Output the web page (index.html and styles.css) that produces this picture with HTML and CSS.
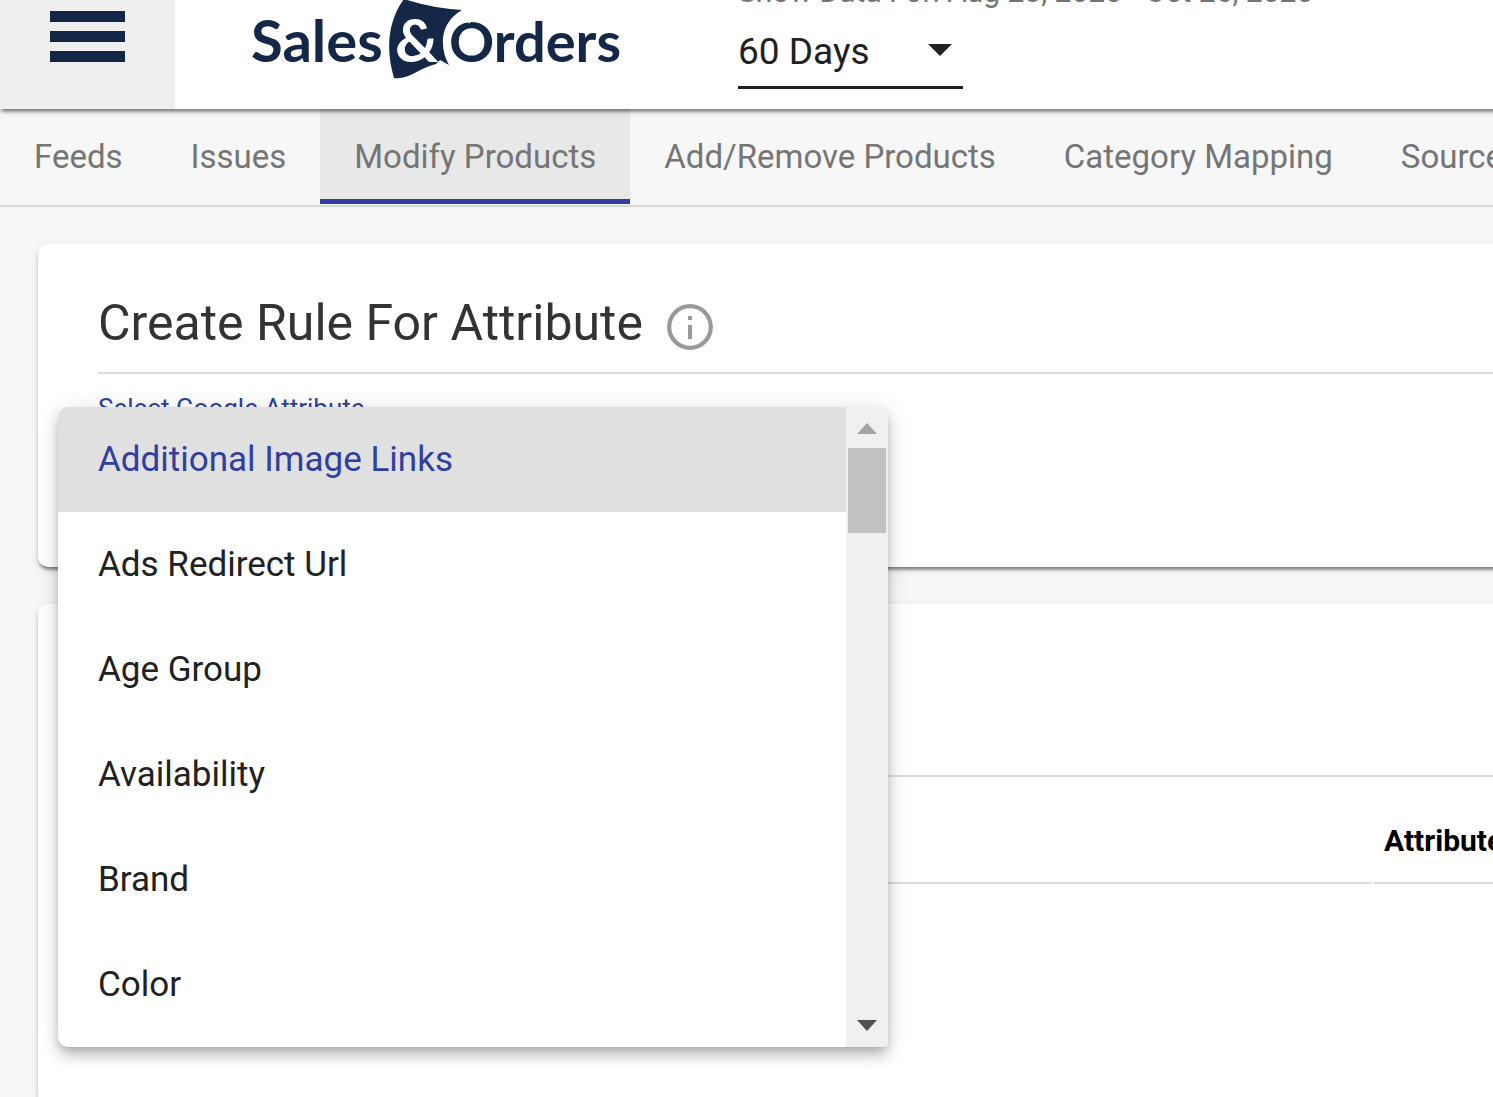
FILE: index.html
```html
<!DOCTYPE html>
<html lang="en">

<head>
	<meta charset="utf-8">
	<meta name="viewport" content="width=device-width, initial-scale=1.0">
	<title>Modify Products</title>
	<link rel="stylesheet" href="styles.css">
</head>

<body>
	<!-- top bar -->
	<header class="topbar">
		<button class="menu-button" type="button" aria-label="Menu">
			<svg width="75" height="51" viewBox="0 0 75 51">
				<path d="M0 0h75v11H0zM0 20h75v11H0zM0 40h75v11H0z" fill="#142746" />
			</svg>
		</button>

		<a class="logo" href="#" aria-label="Sales&amp;Orders">
			<svg width="372" height="80" viewBox="0 0 372 80">
				<path d="M152 -1Q179 8 210 10Q193 20 191 38Q190 53 197 65L188 60L184 64C167 68 157 80 142 78C134 51 135 22 152 -1Z" fill="#142746" />
				<text class="logo-text" x="-1" y="62">Sales</text>
				<text class="logo-amp" x="143" y="62">&amp;</text>
				<text class="logo-text orders" x="197" y="62">Orders</text>
				<path d="M216 23Q226 17 238 24" fill="none" stroke="#fff" stroke-width="1" />
			</svg>
		</a>

		<div class="range">
			<label class="range-label" for="range">Show Data For: Aug 28, 2020 - Oct 26, 2020</label>
			<div class="range-box">
				<select class="range-select" id="range">
					<option>60 Days</option>
				</select>
				<svg class="range-arrow" width="26" height="12" viewBox="0 0 26 12">
					<path d="M1 0h24L13 12z" fill="#212121" />
				</svg>
			</div>
		</div>
	</header>

	<!-- tabs -->
	<nav class="tabs">
		<a class="tab" href="#">Feeds</a>
		<a class="tab" href="#">Issues</a>
		<a class="tab active" href="#">Modify Products</a>
		<a class="tab" href="#">Add/Remove Products</a>
		<a class="tab" href="#">Category Mapping</a>
		<a class="tab" href="#">Source</a>
	</nav>

	<main class="content">
		<section class="card">
			<div class="card-head">
				<h1 class="card-title">Create Rule For Attribute</h1>
				<button class="info" type="button" aria-label="Info">
					<svg width="46" height="46" viewBox="0 0 46 46">
						<circle cx="23" cy="23" r="20.8" fill="none" stroke="#999" stroke-width="4.2" />
						<path d="M21 12h4v4h-4zM21 21h4v14h-4z" fill="#999" />
					</svg>
				</button>
			</div>

			<div class="field">
				<span class="field-label" id="attribute-label">Select Google Attribute</span>

				<!-- open list of attributes -->
				<div class="panel">
					<div class="options" role="listbox" aria-labelledby="attribute-label">
						<button class="option selected" type="button" role="option" aria-selected="true">Additional Image Links</button>
						<button class="option" type="button" role="option">Ads Redirect Url</button>
						<button class="option" type="button" role="option">Age Group</button>
						<button class="option" type="button" role="option">Availability</button>
						<button class="option" type="button" role="option">Brand</button>
						<button class="option" type="button" role="option">Color</button>
					</div>
					<div class="scrollbar">
						<svg width="20" height="11" viewBox="0 0 20 11">
							<path d="M10 0l10 11H0z" fill="#a3a3a3" />
						</svg>
						<div class="thumb"></div>
						<svg width="20" height="11" viewBox="0 0 20 11">
							<path d="M0 0h20L10 11z" fill="#505050" />
						</svg>
					</div>
				</div>
			</div>
		</section>

		<section class="card rules">
			<table class="rules-table">
				<thead>
					<tr>
						<th></th>
						<th class="attribute">Attribute</th>
					</tr>
				</thead>
			</table>
		</section>
	</main>
</body>

</html>
```
FILE: styles.css
```css
* {
	box-sizing: border-box;
}

body {
	margin: 0;
	background: #f7f7f7;
	font-family: Roboto, sans-serif;
	color: #212121;
	overflow: hidden;
}

button {
	border: 0;
	padding: 0;
	background: none;
	font: inherit;
	cursor: pointer;
}

svg {
	display: block;
}

/* top bar */
.topbar {
	position: relative;
	z-index: 1;
	display: flex;
	align-items: flex-end;
	height: 109px;
	margin-right: -20px;
	background: #fff;
	box-shadow: 0 5px 3px -3px rgba(0, 0, 0, .3), 0 3px 3px rgba(0, 0, 0, .2), 0 3px 8px rgba(0, 0, 0, .12);
}

.menu-button {
	display: flex;
	justify-content: center;
	width: 175px;
	height: 100%;
	padding-top: 11px;
	background: #efefef;
}

.logo {
	margin: 0 114px 29px 77px;
}

.logo-text {
	font-family: Lato, sans-serif;
	font-size: 58px;
	font-weight: 700;
	fill: #142746;
}

.logo-text.orders {
	font-size: 56px;
}

.logo-amp {
	font-family: Lato, sans-serif;
	font-size: 60px;
	font-weight: 700;
	fill: #fff;
}

.range {
	padding-bottom: 20px;
}

.range-label {
	display: block;
	margin-bottom: 10px;
	font-size: 30px;
	line-height: 36px;
	color: #757575;
	white-space: nowrap;
}

.range-box {
	display: flex;
	align-items: center;
	width: 225px;
	border-bottom: 3px solid #212121;
}

.range-select {
	flex: 1;
	height: 66px;
	border: 0;
	padding: 0 0 4px;
	background: none;
	appearance: none;
	font: 37px Roboto, sans-serif;
	color: #212121;
}

.range-arrow {
	margin: 0 10px 6px 0;
}

/* tabs */
.tabs {
	display: flex;
	height: 98px;
	border-bottom: 2px solid #d8d8d8;
	overflow: hidden;
}

.tab {
	flex: none;
	height: 95px;
	padding: 0 34px;
	border-bottom: 5px solid transparent;
	font-size: 33px;
	line-height: 95px;
	color: #757575;
	text-decoration: none;
}

.tab.active {
	background: #e8e8e8;
	border-bottom-color: #303f9f;
}

/* cards */
.content {
	padding: 37px 0 0 38px;
}

.card {
	min-height: 323px;
	margin: 0 -20px 37px 0;
	padding: 45px 0 0 60px;
	border-radius: 10px;
	background: #fff;
	box-shadow: 0 5px 3px -3px rgba(0, 0, 0, .3), 0 3px 3px rgba(0, 0, 0, .2), 0 3px 8px rgba(0, 0, 0, .12);
}

.card-head {
	display: flex;
	align-items: center;
	gap: 24px;
	height: 85px;
	border-bottom: 2px solid #ddd;
}

.card-title {
	margin: 0;
	padding-bottom: 16px;
	font-size: 50px;
	font-weight: 400;
	line-height: 60px;
	color: #333;
}

.info {
	padding-bottom: 8px;
}

/* attribute field */
.field {
	position: relative;
	padding-top: 19px;
}

.field-label {
	display: block;
	font-size: 26px;
	line-height: 30px;
	color: #303f9f;
}

.panel {
	position: absolute;
	top: 33px;
	left: -40px;
	z-index: 2;
	display: flex;
	width: 830px;
	height: 640px;
	border-radius: 10px 6px 4px 10px;
	background: #fff;
	box-shadow: 0 5px 10px -3px rgba(0, 0, 0, .2), 0 10px 13px rgba(0, 0, 0, .14), 0 3px 25px rgba(0, 0, 0, .12);
	overflow: hidden;
}

.options {
	flex: 1;
}

.option {
	display: block;
	width: 100%;
	height: 105px;
	padding-left: 40px;
	font-size: 35px;
	text-align: left;
	color: #212121;
}

.option.selected {
	background: #e0e0e0;
	color: #303f9f;
}

.scrollbar {
	display: flex;
	flex-direction: column;
	align-items: center;
	width: 42px;
	padding: 16px 2px;
	background: #f0f0f0;
}

.thumb {
	width: 100%;
	height: 85px;
	margin: 14px 0 auto;
	background: #c1c1c1;
}

/* rules table */
.rules {
	min-height: 493px;
	margin-bottom: 0;
	padding-top: 171px;
	border-radius: 10px 0 0 0;
	overflow: hidden;
}

.rules-table {
	width: calc(100% + 40px);
	border-top: 2px solid #ddd;
	border-spacing: 2px;
	table-layout: fixed;
}

.rules-table th {
	height: 105px;
	padding: 20px 0 0 10px;
	border-bottom: 2px solid #ddd;
	font-size: 30px;
	font-weight: 700;
	text-align: left;
	color: #000;
}

.rules-table .attribute {
	width: 177px;
}
```
